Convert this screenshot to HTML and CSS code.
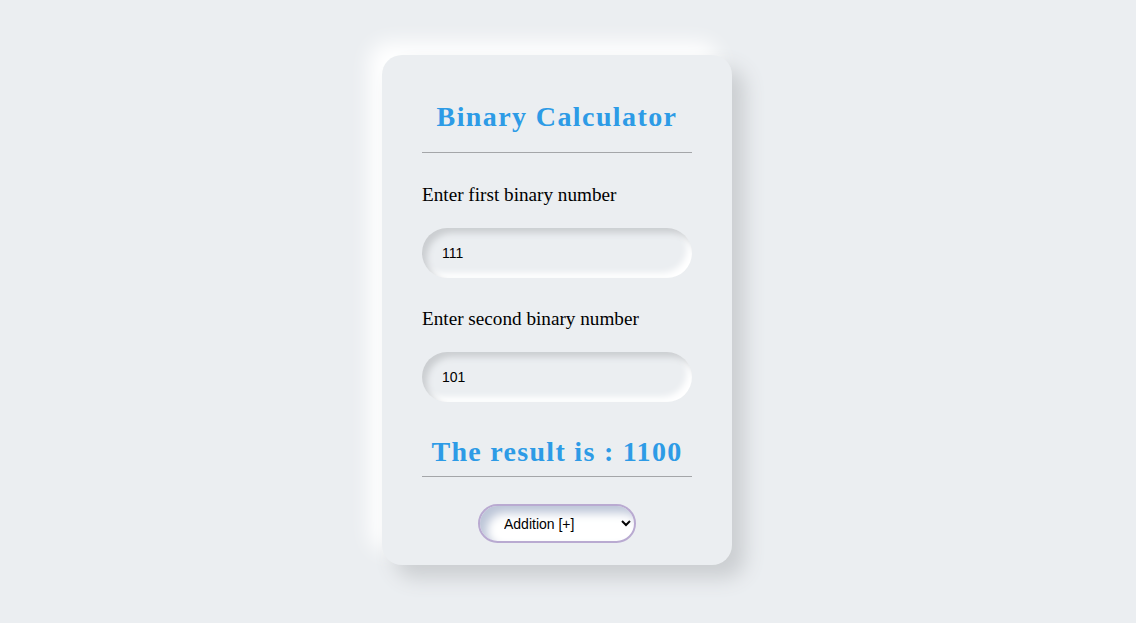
FILE: index.html
```html
<!DOCTYPE html>
<html lang="en">
<head>
  <meta charset="UTF-8">
  <title>Binary Calculator</title>
  <meta name="viewport" content="width=device-width, initial-scale=1.0">
  <link rel="stylesheet" href="styles.css">
</head>
<body>
  <div class="calculator">
    <h1 class="title">Binary Calculator</h1>
    <hr class="line">

    <label class="field-label" for="first">Enter first binary number</label>
    <input class="field-input" id="first" type="text" value="111">

    <label class="field-label second" for="second">Enter second binary number</label>
    <input class="field-input" id="second" type="text" value="101">

    <h2 class="result">The result is : 1100</h2>
    <hr class="line result-line">

    <select class="operation">
      <option>Addition [+]</option>
      <option>Subtraction [-]</option>
      <option>Multiplication [*]</option>
      <option>Division [/]</option>
    </select>
  </div>
</body>
</html>
```

FILE: styles.css
```css
html, body {
  height: 100%;
  margin: 0;
  padding: 0;
}
body {
  background: #ebeef1;
  font-family: "Liberation Serif", "Times New Roman", serif;
  display: flex;
  align-items: center;
  justify-content: center;
}
.calculator {
  width: 350px;
  box-sizing: border-box;
  padding: 46px 40px 22px;
  margin-right: 22px;
  margin-bottom: 3px;
  background: #ebeef1;
  border-radius: 20px;
  box-shadow: 13px 13px 20px #cbced1, -13px -13px 20px #ffffff;
  display: flex;
  flex-direction: column;
}
.title {
  margin: 0;
  font-size: 28px;
  line-height: 32px;
  letter-spacing: 1.4px;
  color: #2d9be6;
  text-align: center;
}
.line {
  margin: 19px 0 0;
  border: none;
  border-top: 1px solid #a4a6a9;
  height: 0;
}
.field-label {
  margin-top: 31px;
  font-size: 19.2px;
  line-height: 21px;
  color: #000;
}
.field-label.second {
  margin-top: 30px;
}
.field-input {
  margin-top: 23px;
  height: 50px;
  box-sizing: border-box;
  padding: 0 20px;
  border: none;
  outline: none;
  border-radius: 25px;
  background: #ebeef1;
  font-family: "Liberation Sans", Arial, sans-serif;
  font-size: 14px;
  color: #000;
  box-shadow: inset 5px 5px 6px #cbced1, inset -5px -5px 6px #ffffff;
}
.result {
  margin: 34px 0 0;
  font-size: 28px;
  line-height: 32px;
  letter-spacing: 1.3px;
  color: #2d9be6;
  text-align: center;
}
.result-line {
  margin-top: 8px;
}
.operation {
  align-self: center;
  margin-top: 27px;
  width: 158px;
  height: 39px;
  padding: 0 8px 0 20px;
  border: 2px solid #b9aad1;
  border-radius: 20px;
  background: #ffffff;
  font-family: "Liberation Sans", Arial, sans-serif;
  font-size: 14px;
  color: #000;
  outline: none;
  box-shadow: inset 7px 7px 10px #bdc6d8;
}
```
